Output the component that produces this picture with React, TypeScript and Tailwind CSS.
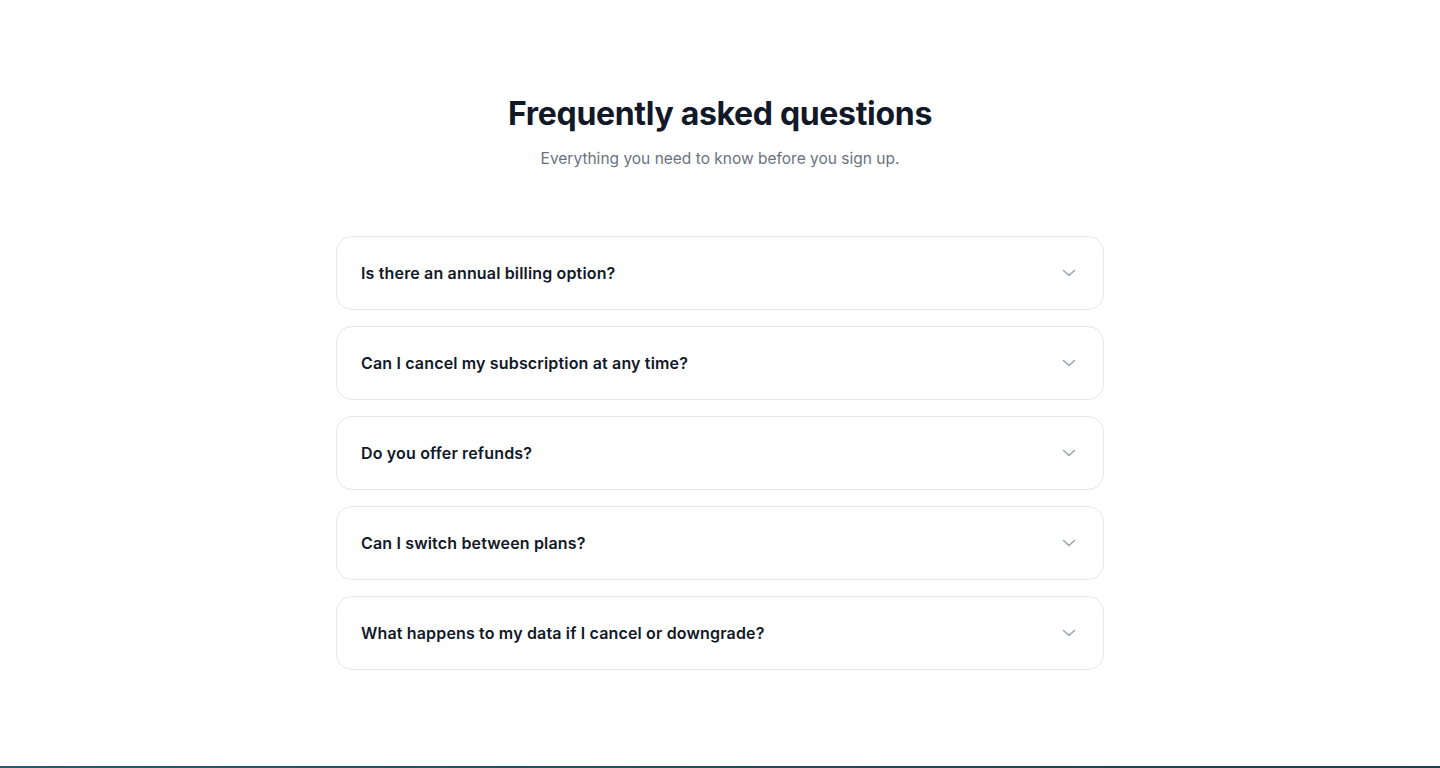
import React from "react";

const questions = [
  "Is there an annual billing option?",
  "Can I cancel my subscription at any time?",
  "Do you offer refunds?",
  "Can I switch between plans?",
  "What happens to my data if I cancel or downgrade?",
];

function Chevron() {
  return (
    <svg width="14" height="8" viewBox="0 0 14 8" fill="none" stroke="currentColor" strokeWidth="1.5" strokeLinecap="round" strokeLinejoin="round">
      <path d="M1.5 1.5l5.5 5 5.5-5" />
    </svg>
  );
}

export default function App() {
  return (
    <div className="min-h-[768px] bg-white flex flex-col" style={{ fontFamily: "Inter, 'Noto Sans', sans-serif" }}>
      <section className="flex-1 pt-[94px] pb-[96px] flex flex-col items-center">
        <h2 className="text-[32px] leading-[40px] font-bold tracking-[-0.01em] text-[#111827]">
          Frequently asked questions
        </h2>
        <p className="mt-[13px] text-[15.5px] leading-[24px] text-[#6b7280]">
          Everything you need to know before you sign up.
        </p>
        <div className="mt-[65px] w-[768px] flex flex-col gap-4">
          {questions.map((q) => (
            <button
              key={q}
              className="w-full h-[74px] flex items-center justify-between px-6 rounded-2xl border border-[#e5e7eb] bg-white text-left"
            >
              <span className="text-[16px] font-semibold tracking-[0.01em] text-[#111827]">{q}</span>
              <span className="text-[#9ca3af] mr-[3px] flex">
                <Chevron />
              </span>
            </button>
          ))}
        </div>
      </section>
      <div className="h-[2px] bg-gradient-to-r from-[#245d73] to-[#1d3d52]" />
    </div>
  );
}
